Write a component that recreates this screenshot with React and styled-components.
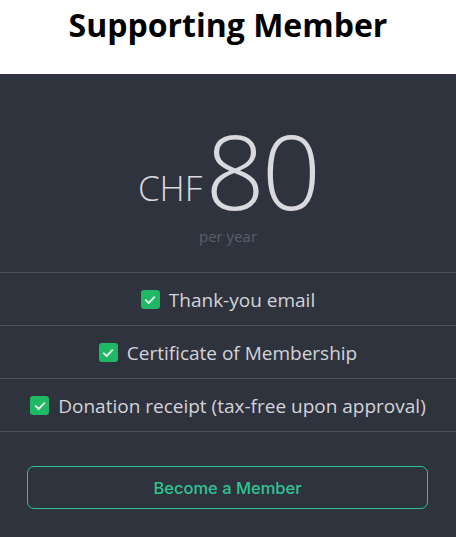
import React from "react";
import styled, { createGlobalStyle } from "styled-components";

const Global = createGlobalStyle`
  html, body { margin: 0; padding: 0; background: #fff; }
  body { font-family: "Open Sans", "Noto Sans", sans-serif; }
`;

const Page = styled.div`
  width: 456px;
  height: 537px;
  display: flex;
  flex-direction: column;
`;

const Header = styled.header`
  height: 74px;
  display: flex;
  justify-content: center;
`;

const Title = styled.h1`
  margin: 3px 0 0;
  font-size: 32px;
  font-weight: 700;
  color: #000;
  line-height: 1.362;
`;

const Panel = styled.section`
  flex: 1;
  background: #2f333e;
  display: flex;
  flex-direction: column;
`;

const PriceBox = styled.div`
  height: 199px;
  display: flex;
  flex-direction: column;
  align-items: center;
  border-bottom: 1px solid #4b4f59;
  box-sizing: border-box;
`;

const Price = styled.div`
  margin-top: 44px;
  display: flex;
  align-items: flex-end;
  color: #d9d9de;
  font-weight: 300;
`;

const Currency = styled.span`
  font-size: 35px;
  line-height: 1;
  padding-bottom: 17px;
  margin-right: 3px;
`;

const Amount = styled.span`
  font-size: 104px;
  line-height: 1;
  letter-spacing: -3px;
`;

const Period = styled.div`
  margin-top: 4px;
  font-size: 15px;
  line-height: 20px;
  color: #5b5f6a;
`;

const Feature = styled.div`
  height: 53px;
  border-bottom: 1px solid #4b4f59;
  box-sizing: border-box;
  display: flex;
  align-items: center;
  justify-content: center;
  gap: 9px;
  color: #d3d4d9;
  font-size: 19px;
  padding-top: 1px;
`;

const Check = styled.span`
  width: 19px;
  height: 19px;
  border-radius: 3px;
  background: #1fb864;
  display: flex;
  align-items: center;
  justify-content: center;
  flex-shrink: 0;
`;

const Footer = styled.div`
  flex: 1;
  padding: 34px 28px 0 27px;
`;

const Button = styled.button`
  width: 100%;
  height: 43px;
  background: transparent;
  border: 1px solid #2ec492;
  border-radius: 7px;
  color: #2ec492;
  font-family: Inter, "Noto Sans", sans-serif;
  font-size: 16.5px;
  font-weight: 500;
  cursor: pointer;
`;

const features = [
  "Thank-you email",
  "Certificate of Membership",
  "Donation receipt (tax-free upon approval)",
];

function CheckBox() {
  return (
    <Check>
      <svg width="14" height="14" viewBox="0 0 14 14" fill="none">
        <path d="M2.8 7.2 L5.7 10 L11.3 4.2" stroke="#e8f6ee" strokeWidth="1.8" strokeLinecap="round" strokeLinejoin="round" />
      </svg>
    </Check>
  );
}

export default function App() {
  return (
    <Page>
      <Global />
      <Header>
        <Title>Supporting Member</Title>
      </Header>
      <Panel>
        <PriceBox>
          <Price>
            <Currency>CHF</Currency>
            <Amount>80</Amount>
          </Price>
          <Period>per year</Period>
        </PriceBox>
        {features.map((f) => (
          <Feature key={f}>
            <CheckBox />
            <span>{f}</span>
          </Feature>
        ))}
        <Footer>
          <Button>Become a Member</Button>
        </Footer>
      </Panel>
    </Page>
  );
}
